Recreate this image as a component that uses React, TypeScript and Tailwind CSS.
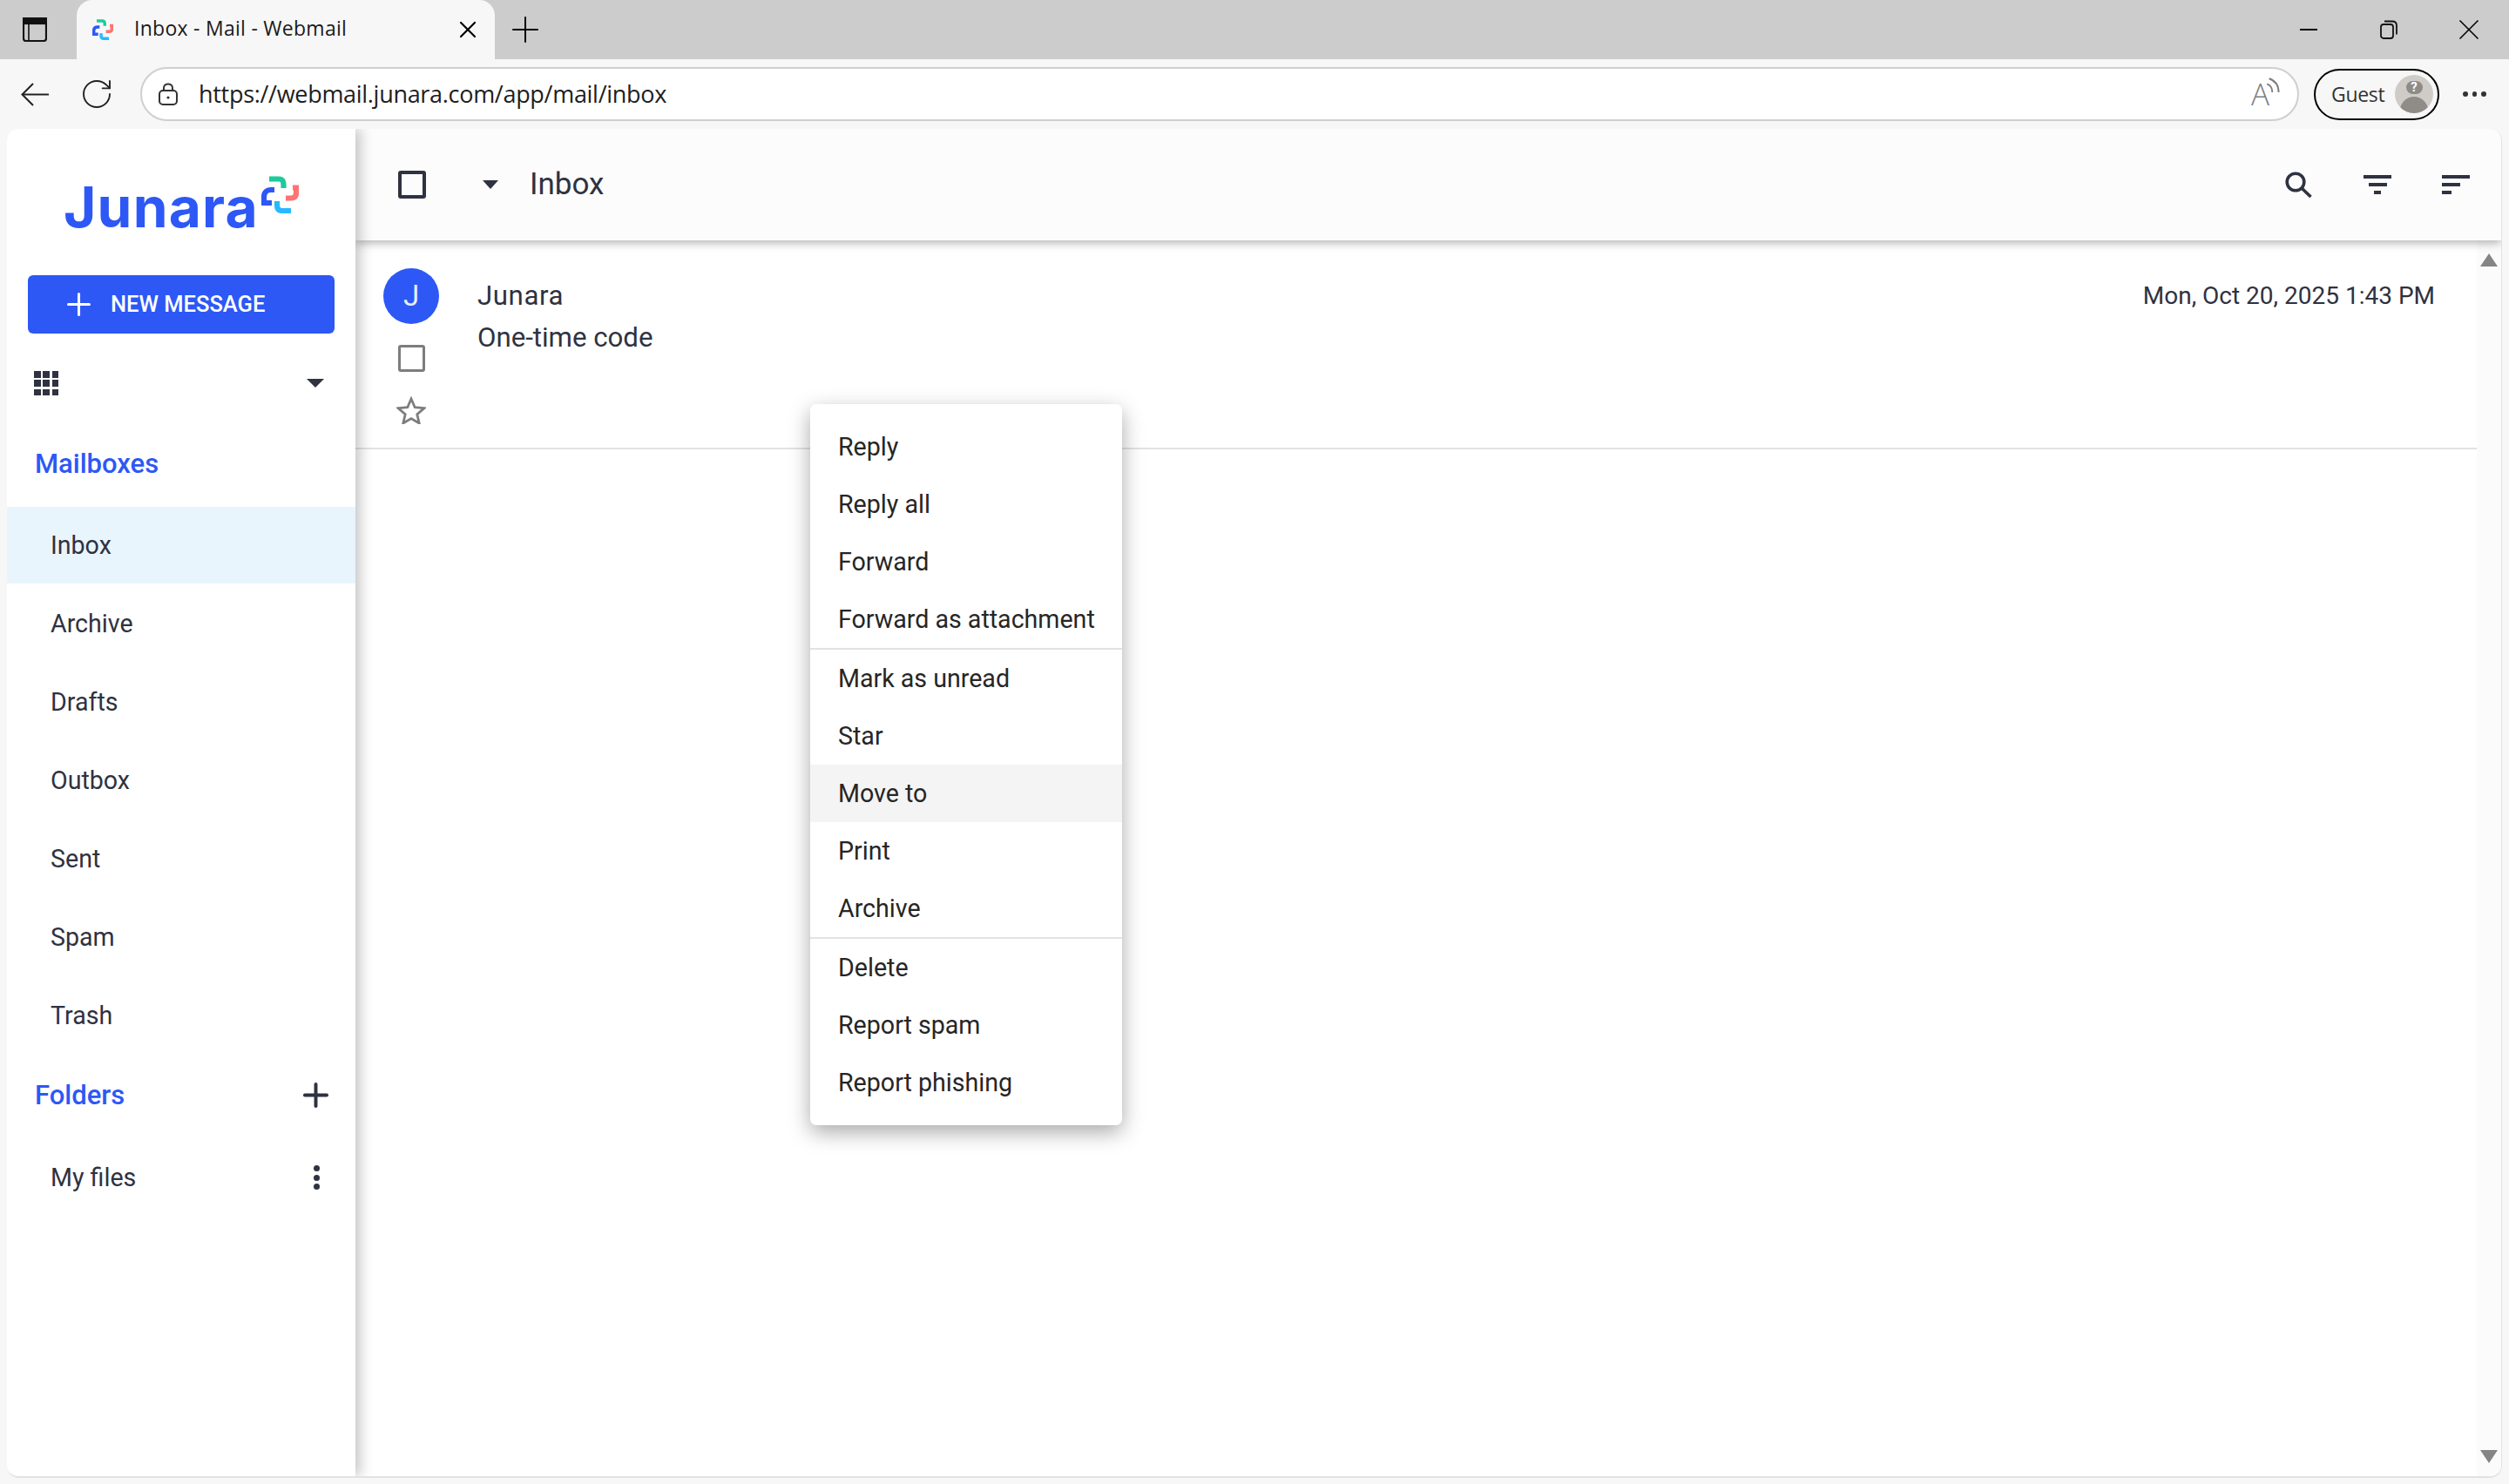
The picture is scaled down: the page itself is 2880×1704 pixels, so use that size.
import { Plus, RotateCw, X } from "lucide-react";

function LogoMark({ className }: { className: string }) {
  return (
    <svg viewBox="0 0 43 43" fill="none" strokeWidth="6.2" className={className}>
      <path d="M9 3.5h11c3.5 0 5.5 2 5.5 5.5v5" stroke="#1dcb9a" />
      <path d="M36 13.5h4v6.5c0 3.5-2 5.5-5.5 5.5H28" stroke="#ff7373" />
      <path d="M18 29v5.5c0 3.5 2 5.5 5.5 5.5H34" stroke="#28b9ff" />
      <path d="M12 31H3v-7c0-5 3-8 8-8h4" stroke="#2d58f5" />
    </svg>
  );
}

function NavItem({ label, active }: { label: string; active?: boolean }) {
  return (
    <div className={`mb-[2px] flex h-[88px] items-center pl-[50px] text-[28.6px] text-[#2f3241] ${active ? "bg-[#e9f5fd]" : ""}`}>
      {label}
    </div>
  );
}

function MenuItem({ label, hover }: { label: string; hover?: boolean }) {
  return (
    <div className={`flex h-[66px] items-center pl-[32px] pt-[1px] text-[28.6px] text-[#262626] ${hover ? "bg-[#f4f4f4]" : ""}`}>
      {label}
    </div>
  );
}

function Bars({ second, third, left }: { second: string; third: string; left?: boolean }) {
  return (
    <div className={`flex w-[32px] flex-col gap-[5px] ${left ? "items-start" : "items-center"}`}>
      <div className="h-[4px] w-[32px] bg-[#2f3241]" />
      <div className={`h-[4px] bg-[#2f3241] ${second}`} />
      <div className={`h-[4px] bg-[#2f3241] ${third}`} />
    </div>
  );
}

export default function App() {
  return (
    <div className="relative flex h-[1704px] w-[2880px] flex-col overflow-hidden bg-[#f7f7f7] font-['Roboto',sans-serif]">
      {/* Tab strip */}
      <div className="flex h-[68px] shrink-0 items-center bg-[#cccccc]">
        <svg viewBox="0 0 28 28" className="ml-[26px] h-[28px] w-[28px]" fill="none" stroke="#111" strokeWidth="2.2">
          <rect x="1" y="1" width="26" height="26" rx="3" />
          <rect x="1" y="1" width="26" height="6" fill="#111" />
          <path d="M7 7v20" strokeWidth="1.6" />
        </svg>
        <div className="ml-[34px] flex h-[68px] w-[480px] items-center rounded-t-[18px] bg-[#f7f7f7] pl-[18px]">
          <LogoMark className="h-[24px] w-[24px]" />
          <span className="mb-[3px] ml-[24px] whitespace-nowrap text-[23px] tracking-[0.27px] text-[#1a1a1a] font-['Open_Sans',sans-serif]">Inbox - Mail - Webmail</span>
          <X className="ml-auto mr-[15px] h-[32px] w-[32px] text-black" strokeWidth={1.6} />
        </div>
        <Plus className="ml-[11px] h-[48px] w-[48px] text-black" strokeWidth={1} />
        <div className="ml-auto flex items-center">
          <div className="flex w-[92px] justify-center">
            <div className="h-[2px] w-[20px] bg-black" />
          </div>
          <div className="flex w-[92px] justify-center">
            <svg viewBox="0 0 20 22" className="h-[22px] w-[20px]" fill="none" stroke="#111" strokeWidth="1.8">
              <rect x="1" y="5" width="14" height="16" rx="3" />
              <path d="M5 1.5h9c3 0 5 2 5 5v10" />
            </svg>
          </div>
          <div className="flex w-[92px] justify-center">
            <X className="h-[40px] w-[40px] text-black" strokeWidth={1} />
          </div>
        </div>
      </div>

      {/* Address bar row */}
      <div className="flex h-[80px] shrink-0 items-center pl-[24px]">
        <svg viewBox="0 0 32 27" className="h-[27px] w-[32px]" fill="none" stroke="#222" strokeWidth="2">
          <path d="M32 13.5H2" />
          <path d="M14 1L1.5 13.5 14 26" />
        </svg>
        <RotateCw className="ml-[35px] h-[40px] w-[40px] text-[#222]" strokeWidth={1.15} />
        <div className="ml-[30px] flex h-[62px] w-[2478px] items-center rounded-full border-2 border-[#cfcfcf] bg-white pl-[18px] pr-[19px]">
          <svg viewBox="0 0 24 26" className="h-[26px] w-[24px]" fill="none" stroke="#333" strokeWidth="2">
            <rect x="2" y="9" width="20" height="16" rx="4" />
            <path d="M7 9V6c0-6 10-6 10 0v3" />
            <circle cx="12" cy="17" r="1.6" fill="#333" stroke="none" />
          </svg>
          <span className="ml-[23px] text-[27px] tracking-[-0.3px] text-[#202020] font-['Open_Sans',sans-serif]">https://webmail.junara.com/app/mail/inbox</span>
          <div className="ml-auto flex items-start text-[#7f7f7f]">
            <span className="text-[35px] font-light leading-[30px] font-['Open_Sans',sans-serif]">A</span>
            <svg viewBox="0 0 14 18" className="-ml-[4px] -mt-[5px] h-[24px] w-[17px]" fill="none" stroke="#7f7f7f" strokeWidth="1.6">
              <path d="M1 6c3 1 5 4 5 8" />
              <path d="M3 1c6 2 9 7 9 13" />
            </svg>
          </div>
        </div>
        <div className="ml-[17px] flex h-[59px] w-[144px] items-center rounded-full border-[2.5px] border-black pl-[18px] pr-[5px]">
          <span className="text-[23px] tracking-[-0.3px] text-[#333] font-['Open_Sans',sans-serif]">Guest</span>
          <div className="ml-auto flex h-[44px] w-[44px] flex-col items-center overflow-hidden rounded-full bg-[#cfccc8]">
            <div className="mt-[7px] flex h-[19px] w-[19px] items-center justify-center rounded-full bg-[#8f8b87] text-[15px] font-bold leading-none text-white">?</div>
            <div className="mt-[3px] h-[24px] w-[32px] rounded-t-full bg-[#8f8b87]" />
          </div>
        </div>
        <div className="ml-[27px] flex gap-[5px]">
          <div className="h-[5.5px] w-[5.5px] rounded-full bg-[#333]" />
          <div className="h-[5.5px] w-[5.5px] rounded-full bg-[#333]" />
          <div className="h-[5.5px] w-[5.5px] rounded-full bg-[#333]" />
        </div>
      </div>

      {/* Page */}
      <div className="mb-[7px] ml-[8px] mr-[8px] flex min-h-0 flex-1 overflow-hidden rounded-[14px] border-b-2 border-r border-[#e2e2e2] bg-white">
        <aside className="z-10 flex w-[400px] shrink-0 flex-col bg-white shadow-[6px_0_14px_rgba(0,0,0,0.22)]">
          <div className="mt-[60px] flex h-[59px] items-end pl-[65px]">
            <span className="text-[64px] font-bold leading-[59px] tracking-[1.2px] text-[#2d58f5] font-['Inter',sans-serif]">Junara</span>
          </div>
          <div className="mx-[24px] mt-[49px] flex h-[67px] items-center rounded-[6px] bg-[#2d58f5] pl-[38px] text-white">
            <Plus className="h-[41px] w-[41px]" strokeWidth={1.8} />
            <span className="ml-[16px] text-[25.5px] font-medium">NEW MESSAGE</span>
          </div>
          <div className="mt-[43px] flex h-[28px] items-center justify-between pl-[31px] pr-[36px]">
            <div className="grid grid-cols-3 gap-[2.75px]">
              {Array.from({ length: 9 }).map((_, i) => (
                <div key={i} className="h-[7.5px] w-[7.5px] bg-[#2f3241]" />
              ))}
            </div>
            <div className="h-0 w-0 border-x-[10px] border-t-[10px] border-x-transparent border-t-[#2f3241]" />
          </div>
          <div className="mt-[59px] flex h-[40px] items-center pl-[32px] text-[31px] font-medium text-[#2d58f5]">Mailboxes</div>
          <div className="mt-[29px]">
            <NavItem label="Inbox" active />
            <NavItem label="Archive" />
            <NavItem label="Drafts" />
            <NavItem label="Outbox" />
            <NavItem label="Sent" />
            <NavItem label="Spam" />
            <NavItem label="Trash" />
          </div>
          <div className="mt-[3px] flex h-[86px] items-center justify-between pl-[32px] pr-[24px] text-[31px] font-medium text-[#2d58f5]">
            Folders
            <Plus className="-mt-[2px] h-[43px] w-[43px] text-[#2f3241]" strokeWidth={2.2} />
          </div>
          <div className="mt-[7px] flex h-[88px] items-center justify-between pl-[50px] pr-[41px] text-[28.6px] text-[#2f3241]">
            My files
            <div className="flex flex-col gap-[3.5px]">
              <div className="h-[7px] w-[7px] rounded-full bg-[#2f3241]" />
              <div className="h-[7px] w-[7px] rounded-full bg-[#2f3241]" />
              <div className="h-[7px] w-[7px] rounded-full bg-[#2f3241]" />
            </div>
          </div>
        </aside>

        <main className="flex min-w-0 flex-1 flex-col">
          <div className="z-[5] flex h-[128px] shrink-0 items-center bg-[#fcfcfc] pl-[49px] pr-[36px] shadow-[0_3px_10px_rgba(0,0,0,0.3)]">
            <div className="h-[32px] w-[32px] rounded-[3px] border-[4px] border-[#2f3241]" />
            <div className="ml-[65px] h-0 w-0 border-x-[9px] border-t-[10px] border-x-transparent border-t-[#2f3241]" />
            <span className="ml-[36px] text-[35px] text-[#2f3241]">Inbox</span>
            <div className="ml-auto flex items-center">
              <svg viewBox="0 0 31 30" className="h-[30px] w-[31px]" fill="none" stroke="#2f3241" strokeWidth="3.6">
                <circle cx="12" cy="12" r="9.8" />
                <path d="M19 19l10.5 10" />
              </svg>
              <div className="ml-[59px]"><Bars second="w-[21px]" third="w-[8px]" /></div>
              <div className="ml-[58px]"><Bars second="w-[21px]" third="w-[11px]" left /></div>
            </div>
          </div>

          <div className="flex min-h-0 flex-1">
            <div className="min-w-0 flex-1">
              <div className="flex h-[240px] border-b-2 border-[#e2e2e2] pl-[32px] pr-[48px]">
                <div className="flex w-[64px] flex-col items-center pt-[32px]">
                  <div className="flex h-[64px] w-[64px] items-center justify-center rounded-full bg-[#2d58f5] text-[33px] text-[#e8ecff]">J</div>
                  <div className="mt-[24px] h-[31px] w-[31px] rounded-[3px] border-[3px] border-[#7d7d7d]" />
                  <svg viewBox="0 0 34 32" className="mt-[28px] h-[32px] w-[34px]" fill="none" stroke="#7d7d7d" strokeWidth="2.8">
                    <path d="M17 3l4.2 9.7 10.6 1-8 7 2.4 10.3-9.2-5.4-9.2 5.4 2.4-10.3-8-7 10.6-1z" />
                  </svg>
                </div>
                <div className="ml-[44px] flex-1 pt-[40px] text-[31.2px] leading-[48px] text-[#2f3241]">
                  <div className="tracking-[0.6px]">Junara</div>
                  <div>One-time code</div>
                </div>
                <div className="pt-[40px] text-[28px] leading-[48px] text-[#2f3241]">Mon, Oct 20, 2025 1:43 PM</div>
              </div>
            </div>
            <div className="flex w-[28px] shrink-0 flex-col items-center justify-between bg-[#fbfbfb] pb-[15px] pt-[15px]">
              <div className="h-0 w-0 border-x-[10px] border-b-[15px] border-x-transparent border-b-[#858585]" />
              <div className="h-0 w-0 border-x-[10px] border-t-[15px] border-x-transparent border-t-[#858585]" />
            </div>
          </div>
        </main>
      </div>

      {/* Logo mark sits beside the wordmark, over the sidebar */}
      <LogoMark className="absolute left-[300px] top-[202px] z-20 h-[43px] w-[43px]" />

      {/* Context menu */}
      <div className="absolute left-[930px] top-[464px] z-20 w-[358px] rounded-[7px] bg-white py-[16px] shadow-[0_8px_24px_rgba(0,0,0,0.34)]">
        <MenuItem label="Reply" />
        <MenuItem label="Reply all" />
        <MenuItem label="Forward" />
        <MenuItem label="Forward as attachment" />
        <div className="h-[2px] bg-[#e2e2e2]" />
        <MenuItem label="Mark as unread" />
        <MenuItem label="Star" />
        <MenuItem label="Move to" hover />
        <MenuItem label="Print" />
        <MenuItem label="Archive" />
        <div className="h-[2px] bg-[#e2e2e2]" />
        <MenuItem label="Delete" />
        <MenuItem label="Report spam" />
        <MenuItem label="Report phishing" />
      </div>
    </div>
  );
}
